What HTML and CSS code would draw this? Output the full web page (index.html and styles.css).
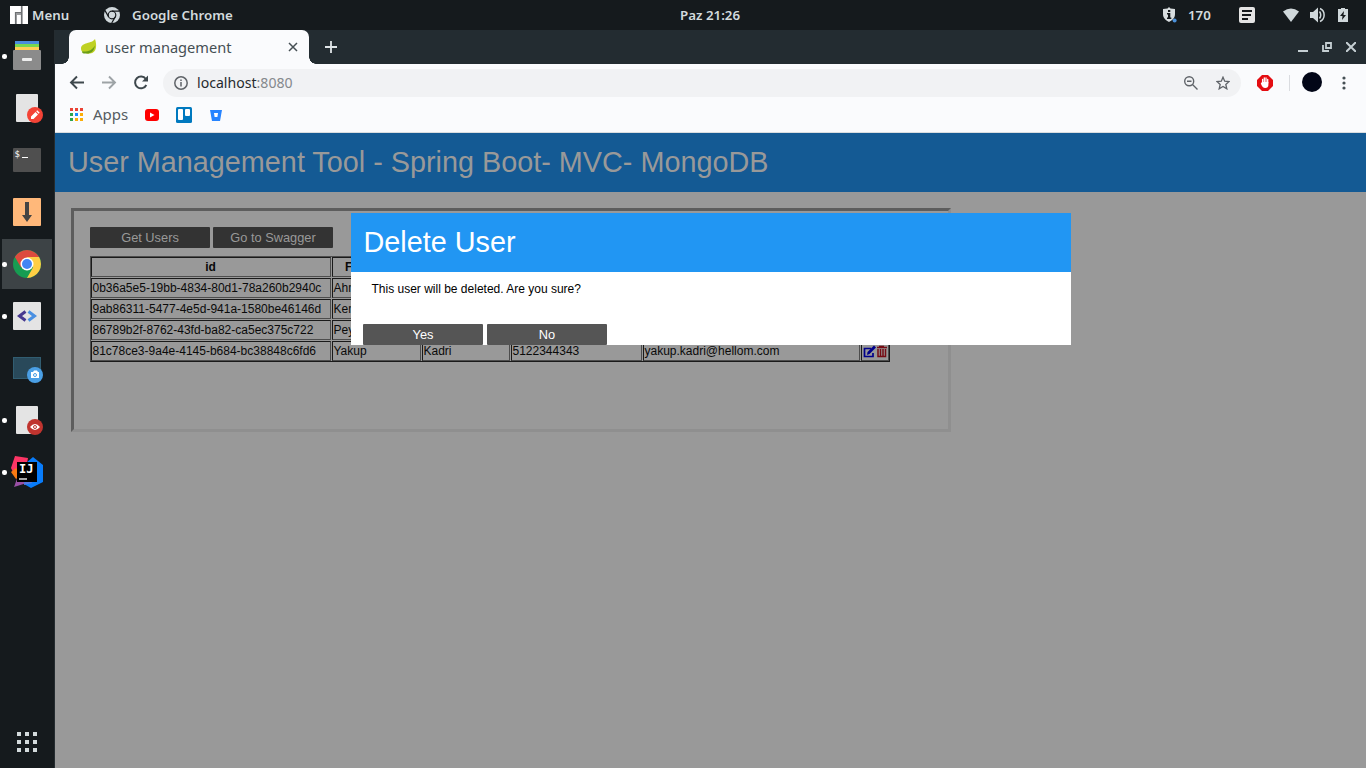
FILE: index.html
```html
<!DOCTYPE html>
<html lang="tr">
<head>
<meta charset="utf-8">
<title>user management</title>
<link rel="stylesheet" href="styles.css">
</head>
<body>
<header class="panel">
  <svg class="logo" width="18" height="18" viewBox="0 0 18 18"><path fill="#fff" d="M0 0h18v18H0z"/><path d="M5.500 18V6.500H11M11.500 0v18" fill="none" stroke="#6d7072" stroke-width="1.200"/><path d="M6 7h5v2H7v9H6zM12 0h.800v18H12z" fill="#9a9c9e"/></svg>
  <span class="menu">Menu</span>
  <svg class="chrome-mono" width="16" height="16" viewBox="0 0 16 16"><circle cx="8" cy="8" r="8" fill="#d0d8db"/><g fill="none" stroke="#15191c" stroke-width="1.200"><circle cx="8" cy="8" r="3.800"/><path d="M8 4.200h7.300M4.700 9.900L1 3.600M11.300 9.900L7.700 16"/></g></svg>
  <span class="app-name">Google Chrome</span>
  <span class="clock">Paz 21:26</span>
  <svg class="shield" width="15" height="16" viewBox="0 0 15 16"><path d="M7 0l1.500 1.500L13 2v5c0 4-2.500 6-6 8-3.500-2-6-4-6-8V2l4.500-.5z" fill="#d8dddf"/><path d="M6 3h2.300v2H6zM5 6h3.300v4.500h1V12H5v-1.500h1v-3H5z" fill="#15191c"/><circle cx="12.600" cy="13.500" r="2" fill="#4a90d9"/></svg>
  <span class="count">170</span>
  <svg class="note" width="16" height="16" viewBox="0 0 16 16"><rect width="16" height="16" rx="2" fill="#e4e4e4"/><path d="M3 4h10M3 8h9M3 12h6" stroke="#15191c" stroke-width="2"/></svg>
  <svg class="wifi" width="16" height="14" viewBox="0 0 16 14"><path d="M0 3.500Q8-2.500 16 3.500L8 14z" fill="#d0d8db"/></svg>
  <svg class="volume" width="16" height="16" viewBox="0 0 16 16"><path d="M0 5h3l5-4.500v15L3 11H0z" fill="#d0d8db"/><path d="M9.500 4.500q2.500 3.500 0 7M10 1.500c5.500 2.500 5.500 10.500 0 13" fill="none" stroke="#d0d8db" stroke-width="1.500"/></svg>
  <svg class="battery" width="10" height="14" viewBox="0 0 10 14"><path d="M0 1h3V0h4v1h3v13H0z" fill="#d0d8db"/><path d="M6 3L2 8h2.500L4 12l4-5H5.500z" fill="#15191c"/></svg>
</header>
<div class="desktop">
  <nav class="dock">
    <div class="slot running"><svg width="32" height="32" viewBox="0 0 32 32"><path fill="#4a8bdc" d="M4 1h24v4H4z"/><path fill="#76d750" d="M4 4h24v3H4z"/><path fill="#ffcd55" d="M4 7h24v4H4z"/><rect x="2" y="10" width="28" height="20" rx="1" fill="#8b8b8b"/><rect x="11" y="18" width="10" height="3" rx="1" fill="#eee"/></svg></div>
    <div class="slot"><svg width="32" height="32" viewBox="0 0 32 32"><rect x="5" y="2" width="22" height="28" rx="1" fill="#e4e4e4"/><circle cx="24" cy="23" r="8" fill="#f44336"/><path d="M20 27v-2.500l4.500-4.500 2.500 2.500-4.500 4.500zM25.200 19.300l1-1 2.500 2.500-1 1z" fill="#fff"/></svg></div>
    <div class="slot"><svg width="32" height="32" viewBox="0 0 32 32"><rect x="2" y="4" width="28" height="24" rx="1" fill="#4f4f4f"/><path d="M11 13.500h6" stroke="#fff"/><text x="3.500" y="13" class="prompt">$</text></svg></div>
    <div class="slot"><svg width="32" height="32" viewBox="0 0 32 32"><rect x="2" y="2" width="28" height="28" rx="1" fill="#ffb87a"/><path d="M14 6h4v13h3l-5 7-5-7h3z" fill="#444"/></svg></div>
    <div class="slot running active"><svg width="32" height="32" viewBox="0 0 32 32"><circle cx="16" cy="16" r="14" fill="#179c52"/><path d="M16 16L3.900 9A14 14 0 0 1 28.100 9z" fill="#dd4b3e"/><path d="M28.100 9A14 14 0 0 1 16 30l6-10.500L16 9z" fill="#ffce44"/><path d="M3.900 9L10 19.500 16 16V9z" fill="#dd4b3e"/><circle cx="16" cy="16" r="6.500" fill="#fff"/><circle cx="16" cy="16" r="5" fill="#4285f4"/></svg></div>
    <div class="slot running"><svg width="32" height="32" viewBox="0 0 32 32"><rect x="2" y="2" width="28" height="28" rx="1" fill="#e4e4e4"/><path d="M14.500 11.500L8.500 16l6 4.500" fill="none" stroke="#473990" stroke-width="3"/><path d="M17.500 11.500l6 4.500-6 4.500" fill="none" stroke="#4a90e2" stroke-width="3"/></svg></div>
    <div class="slot"><svg width="32" height="32" viewBox="0 0 32 32"><rect x="2.500" y="5.500" width="27" height="21" fill="#29495a" stroke="#315d71"/><circle cx="24" cy="23" r="8" fill="#4a9fe5"/><path d="M20 20h2l1-1.500h3l1 1.500h1v6h-8z" fill="#fff"/><circle cx="24" cy="23" r="1.500" fill="#fff" stroke="#4a9fe5"/></svg></div>
    <div class="slot running"><svg width="32" height="32" viewBox="0 0 32 32"><rect x="5" y="2" width="22" height="28" rx="1" fill="#e4e4e4"/><circle cx="24" cy="23" r="8" fill="#c0342f"/><path d="M19 23q5-6 10 0-5 6-10 0z" fill="#fff"/><circle cx="24" cy="23" r="1.500" fill="#fff" stroke="#c0342f"/></svg></div>
    <div class="slot running"><svg width="32" height="32" viewBox="0 0 32 32"><path d="M4 0l13 2-3 16-12-2L0 12z" fill="#fc3565"/><path d="M0 16l5-4 5 8-5 3z" fill="#f97a12"/><path d="M3 31l4-11 12 6z" fill="#9950a5"/><path d="M15 7l7-6 10 8v17l-12 6-7-4z" fill="#087cfa"/><path d="M15 7l6 20-8 2z" fill="#5378df"/><path d="M6 6h20v20H6z" fill="#000"/><path d="M8 23h8" stroke="#fff" stroke-width="1.300"/><text x="8" y="17" class="ij">IJ</text></svg></div>
    <div class="apps-button"><i></i><i></i><i></i><i></i><i></i><i></i><i></i><i></i><i></i></div>
  </nav>
  <main class="browser">
    <div class="tabs">
      <div class="tab">
        <svg class="leaf" width="17" height="16" viewBox="0 0 17 16"><path d="M15 0c2 6 2 14-5 14.500-3 .5-9 0-9-5C1 3 12 5 15 0z" fill="#bfd123"/><path d="M2 12.500c6 .500 10-1 13-6-1 6-4 8-8 8-3 .300-5 0-5-2z" fill="#6a9d18"/></svg>
        <span class="tab-title">user management</span>
        <svg width="10" height="10" viewBox="0 0 10 10"><path d="M1 1l8 8M9 1L1 9" stroke="#454f54" stroke-width="1.500"/></svg>
      </div>
      <svg class="plus" width="12" height="12" viewBox="0 0 12 12"><path d="M6 0v12M0 6h12" stroke="#dfe5e7" stroke-width="1.800"/></svg>
      <div class="controls">
        <svg width="10" height="12" viewBox="0 0 10 12"><path d="M0 10h10" stroke="#c5cfd3" stroke-width="2"/></svg>
        <svg width="10" height="10" viewBox="0 0 10 10"><path d="M4 1h5v5H4zM1 3v6h6" fill="none" stroke="#c5cfd3" stroke-width="1.800"/></svg>
        <svg width="10" height="10" viewBox="0 0 10 10"><path d="M0 0l10 10M10 0L0 10" stroke="#c5cfd3" stroke-width="2"/></svg>
      </div>
    </div>
    <div class="toolbar">
      <svg class="nav-icon" width="16" height="16" viewBox="0 0 16 16"><path d="M15 7.500H2M8 1.500l-6 6 6 6" fill="none" stroke="#3e484d" stroke-width="1.900"/></svg>
      <svg class="nav-icon" width="16" height="16" viewBox="0 0 16 16"><path d="M1 7.500h13M8 1.500l6 6-6 6" fill="none" stroke="#9da3a6" stroke-width="1.900"/></svg>
      <svg class="nav-icon" width="16" height="16" viewBox="0 0 16 16"><path d="M13.300 10A5.900 5.900 0 1 1 12.800 4" fill="none" stroke="#3e484d" stroke-width="2"/><path d="M15 .500v6H9z" fill="#3e484d"/></svg>
      <div class="address">
        <svg width="14" height="14" viewBox="0 0 14 14"><circle cx="7" cy="7" r="6.200" fill="none" stroke="#5f6368" stroke-width="1.500"/><path d="M7 6v4.500M7 3.500v1.500" stroke="#5f6368" stroke-width="1.500"/></svg>
        <span class="url">localhost<span class="port">:8080</span></span>
        <svg class="lens" width="14" height="14" viewBox="0 0 14 14"><circle cx="5.200" cy="5.200" r="4.500" fill="none" stroke="#5f6368" stroke-width="1.400"/><path d="M3 5.200h4.500M8.500 8.500L13.500 13.500" stroke="#5f6368" stroke-width="1.400"/></svg>
        <svg class="star" width="14" height="14" viewBox="0 0 14 14"><path d="M7 1.200l1.700 4 4.300.4-3.200 2.900 1 4.300L7 10.500l-3.800 2.300 1-4.300L1 5.600l4.300-.4z" fill="none" stroke="#5f6368" stroke-width="1.300"/></svg>
      </div>
      <svg class="stop" width="16" height="16" viewBox="0 0 16 16"><path d="M5 0h6l5 5v6l-5 5H5l-5-5V5z" fill="#e40d12"/><path d="M5.600 8V4.500M7.300 7V3M9 7V3M10.700 8V4.500" stroke="#fff" stroke-width="1.300" stroke-linecap="round"/><path d="M5 7h6.400v3c0 2-1.200 3-3.200 3-2 0-3.200-1.500-4.400-4.500z" fill="#fff"/></svg>
      <div class="divider"></div>
      <div class="avatar"></div>
      <svg class="dots" width="4" height="14" viewBox="0 0 4 14"><g fill="#454f54"><circle cx="2" cy="2" r="1.600"/><circle cx="2" cy="7" r="1.600"/><circle cx="2" cy="12" r="1.600"/></g></svg>
    </div>
    <div class="bookmarks">
      <svg class="apps-icon" width="13" height="13" viewBox="0 0 13 13"><path d="M0 0h3v3H0zM5 0h3v3H5zM10 0h3v3h-3z" fill="#ea4335"/><path d="M0 5h3v3H0zM0 10h3v3H0z" fill="#2da44e"/><path d="M5 5h3v3H5z" fill="#1a8cff"/><path d="M10 5h3v3h-3zM5 10h3v3H5zM10 10h3v3h-3z" fill="#fbae08"/></svg>
      <span class="apps-label">Apps</span>
      <svg class="bm" width="16" height="16" viewBox="0 0 16 16"><rect x="1" y="2" width="14" height="12" rx="3" fill="#f00"/><path d="M6 5.500l4.500 2.500L6 10.500z" fill="#fff"/></svg>
      <svg class="bm" width="16" height="16" viewBox="0 0 16 16"><rect width="16" height="16" rx="1.500" fill="#0079bf"/><rect x="2" y="2" width="5" height="11" rx="1" fill="#fff"/><rect x="9" y="2" width="5" height="7" rx="1" fill="#fff"/></svg>
      <svg class="bm" width="16" height="16" viewBox="0 0 16 16"><path d="M2 3h12l-2 11H4z" fill="#2684ff"/><path d="M6 6h4l-.6 4H6.600z" fill="#fff"/></svg>
    </div>
    <section class="page">
      <h1 class="page-title">User Management Tool - Spring Boot- MVC- MongoDB</h1>
      <div class="frame">
        <div class="actions"><button class="btn dim">Get Users</button><button class="btn dim">Go to Swagger</button></div>
        <div class="users">
          <b>id</b><b>First Name</b><b>Last Name</b><b>Phone</b><b>Email</b><b></b>
          <span>0b36a5e5-19bb-4834-80d1-78a260b2940c</span><span>Ahmet</span><span></span><span></span><span></span><span></span>
          <span>9ab86311-5477-4e5d-941a-1580be46146d</span><span>Kemal</span><span></span><span></span><span></span><span></span>
          <span>86789b2f-8762-43fd-ba82-ca5ec375c722</span><span>Peyami</span><span></span><span></span><span></span><span></span>
          <span>81c78ce3-9a4e-4145-b684-bc38848c6fd6</span><span>Yakup</span><span>Kadri</span><span>5122344343</span><span>yakup.kadri@hellom.com</span>
          <span class="tools"><svg width="26" height="14" viewBox="0 0 26 14"><path d="M8 3.500H1.500v8H10V8" fill="none" stroke="#00008b" stroke-width="1.700"/><path d="M4 10l.5-3L11 .500l2 2L6.500 9z" fill="#00008b"/><path d="M14 2.500h10M16 1.500h5M15 4v7.500h7.500V4M17.500 4v7M20 4v7" fill="none" stroke="#760b13" stroke-width="1.500"/></svg></span>
        </div>
      </div>
      <div class="modal">
        <h2 class="modal-title">Delete User</h2>
        <p class="message">This user will be deleted. Are you sure?</p>
        <div class="choices"><button class="btn">Yes</button><button class="btn">No</button></div>
      </div>
    </section>
  </main>
</div>
</body>
</html>
```
FILE: styles.css
```css
* { box-sizing: border-box; }
body { margin: 0; width: 1366px; height: 768px; overflow: hidden; background: #151a1d; font-family: "Noto Sans", sans-serif; }
svg { display: block; flex: none; }
.panel { height: 30px; display: flex; align-items: center; padding: 0 17px 0 10px; color: #d3dadd; font-size: 13.33px; font-weight: 600; line-height: 29px; white-space: nowrap; }
.panel span { flex: none; }
.menu { margin-left: 4px; width: 72px; }
.app-name { margin-left: 12px; width: 548px; }
.clock { width: 482px; }
.count { margin-left: 11px; width: 51px; }
.wifi { margin-left: 28px; }
.volume { margin-left: 11px; }
.battery { margin-left: 12px; }
.desktop { display: flex; height: 738px; }
.dock { width: 55px; height: 738px; display: flex; flex-direction: column; gap: 2px; padding: 1px 3px 12px 2px; border-right: 1px solid #252c30; }
.slot { height: 50px; width: 50px; position: relative; display: flex; justify-content: center; align-items: center; }
.active { background: #3d4346; }
.running::before { content: ""; position: absolute; left: 0; top: 23px; width: 4.500px; height: 4.500px; border-radius: 50%; background: #fff; }
.prompt { font: 9px "DejaVu Sans Mono", monospace; fill: #fff; }
.ij { font: bold 12px "DejaVu Sans Mono", monospace; fill: #fff; }
.apps-button { margin: auto 0 4px 15px; display: grid; grid-template-columns: repeat(3, 4px); gap: 4px; }
.apps-button i { height: 4px; background: #d3dadc; }
.browser { flex: 1; min-width: 0; background: #fafbfd; }
.tabs { height: 34px; display: flex; align-items: center; background: #232c31; padding: 0 10px 0 14px; }
.tab { width: 240px; height: 34px; background: #fafbfd; border-radius: 7px 7px 0 0; display: flex; align-items: center; padding: 0 11px; position: relative; }
.tab::before, .tab::after { content: ""; position: absolute; bottom: 0; width: 7px; height: 7px; }
.tab::before { left: -7px; background: radial-gradient(circle at 0 0, transparent 6.5px, #fafbfd 7px); }
.tab::after { right: -7px; background: radial-gradient(circle at 100% 0, transparent 6.5px, #fafbfd 7px); }
.tab-title { margin-left: 8px; flex: 1; font-size: 14.6px; line-height: 20px; padding-bottom: 1px; color: #454f54; white-space: nowrap; }
.plus { margin-left: 16px; }
.controls { margin-left: auto; display: flex; align-items: center; gap: 14px; }
.toolbar { height: 37px; display: flex; align-items: center; padding: 0 20px 0 14px; }
.nav-icon { margin-right: 16px; }
.address { margin-left: -2px; width: 1078px; height: 28px; border-radius: 14px; background: #f1f2f4; display: flex; align-items: center; padding: 0 11px; }
.url { margin-left: 9px; font-size: 14.1px; color: #262b2e; }
.port { color: #85898d; }
.lens { margin-left: auto; }
.star { margin-left: 18px; }
.stop { margin-left: 16px; }
.divider { margin-left: 16px; width: 1px; height: 16px; background: #dadce0; }
.avatar { margin: -1px 0 0 12px; width: 20px; height: 20px; border-radius: 50%; background: #020617; }
.dots { margin-left: 20px; }
.bookmarks { height: 32px; display: flex; align-items: center; padding: 0 0 4px 15px; border-bottom: 1px solid #d9dde0; }
.apps-label { margin-left: 10px; width: 35px; font-size: 15px; line-height: 27px; color: #555c61; }
.bm { margin-left: 16px; }
.page { height: 635px; background: #999; position: relative; font-family: "Liberation Sans", Arial, sans-serif; font-size: 12px; color: #0a0a0a; }
.page-title { margin: 0; height: 59px; line-height: 58px; padding-left: 13px; background: #145a94; color: #999; font-size: 28.8px; font-weight: 400; white-space: nowrap; }
.frame { margin: 16px; width: 880px; height: 224px; padding: 16px; border: 3px solid; border-color: #5d5d5d #8f8f8f #8f8f8f #5d5d5d; }
.actions { display: flex; gap: 3px; }
.btn { width: 120px; height: 21px; border: 0; border-radius: 1px; padding: 0; background: #555; color: #fff; font: 12.8px "Liberation Sans", Arial, sans-serif; }
.dim { background: #333; color: #999; }
.users { margin-top: 8px; width: 800px; display: grid; grid-template-columns: 240px 89px 88px 131px 217px 28px; grid-auto-rows: 20px; gap: 1px; border: 1px solid; border-color: #4d4d4d #1a1a1a #1a1a1a #4d4d4d; }
.users > * { border: 1px solid; border-color: #1a1a1a #4d4d4d #4d4d4d #1a1a1a; padding-left: 0.5px; line-height: 18px; white-space: nowrap; overflow: hidden; }
.users b { text-align: center; padding: 0 1px 0 0; }
.tools { padding-top: 3px; }
.modal { position: absolute; left: 296px; top: 80px; width: 720px; height: 132px; background: #fff; color: #000; }
.modal-title { margin: 0; height: 59px; line-height: 58px; padding-left: 12.5px; background: #2196f3; color: #fff; font-size: 28.8px; font-weight: 400; }
.message { margin: 0; padding: 9px 20.5px 0; height: 52px; line-height: 16px; }
.choices { display: flex; gap: 4px; padding-left: 12px; }
```
